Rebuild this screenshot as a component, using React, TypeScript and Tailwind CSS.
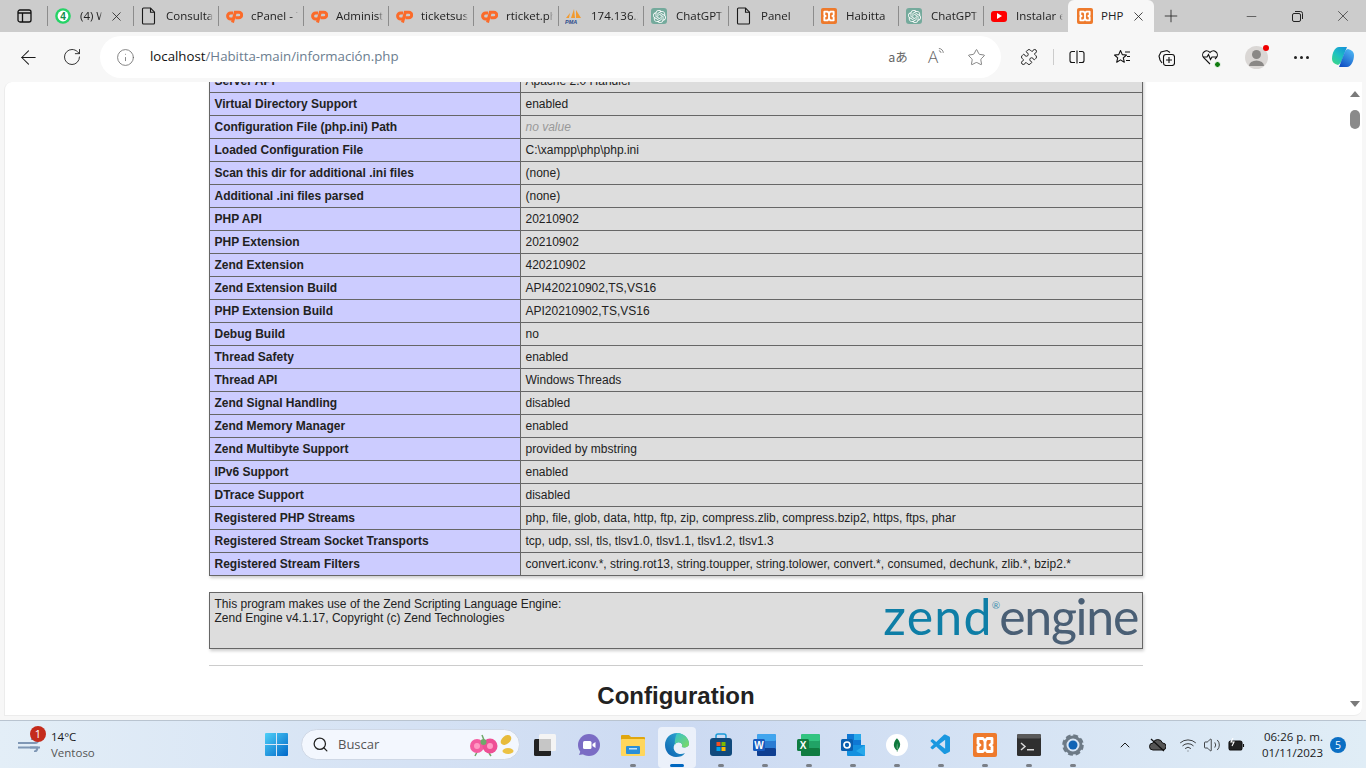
import React from "react";
import { ArrowLeft, RotateCw, Info, Star, Puzzle, X, Plus, Minus, ChevronUp, Wifi, Volume2, Search } from "lucide-react";
import { SiOpenai, SiMongodb } from "react-icons/si";
import { VscVscode } from "react-icons/vsc";

const Doc = () => (
  <svg width="16" height="18" viewBox="0 0 16 18" fill="none" stroke="#1a1a1a" strokeWidth="1.100"><path d="M2.500 1h7l4 4.200V16a1 1 0 0 1-1 1h-10a1 1 0 0 1-1-1V2a1 1 0 0 1 1-1z" /><path d="M9.500 1v4.200h4" /></svg>
);
const CP = () => (
  <svg width="17" height="13" viewBox="0 0 17 13" fill="none" stroke="#fb6b2a" strokeWidth="3"><path d="M7 3H4.600a3 3 0 0 0 0 6H7" /><path d="M6.500 12.500 9.300 2.200h3.600a2.700 2.700 0 0 1 0 5.600H9.500" /></svg>
);
const Pma = () => (
  <svg width="18" height="16" viewBox="0 0 18 16"><path d="M1 10 5 5l-1 5zM6 10l3-9 1 9zM11 10l0-8 5 8z" fill="#f29a2e" /><text x="0" y="15.500" fontSize="5.500" fontWeight="700" fontStyle="italic" fill="#2b4a8b" fontFamily="Liberation Sans">PMA</text></svg>
);
const Gpt = () => (
  <span className="w-4 h-4 rounded-[3px] bg-[#74aa9c] flex items-center justify-center text-white"><SiOpenai size={13} /></span>
);
const Xampp = ({ s = 16 }: { s?: number }) => (
  <span className="rounded-[2px] bg-[#ee7a2c] flex items-center justify-center" style={{ width: s, height: s }}>
    <svg width={s} height={s} viewBox="0 0 24 24" fill="none" stroke="#fff" strokeWidth="2.800" strokeLinejoin="round"><path d="M5 5.500h5l2 2.500 2-2.500h5v5l-2 1.500 2 1.500v5h-5l-2-2.500-2 2.500H5v-5L7 12l-2-1.500z" /><path d="M12 8v8" /></svg>
  </span>
);
const Wa = () => (
  <svg width="16" height="16" viewBox="0 0 16 16"><circle cx="8" cy="8" r="7.800" fill="#25d366" /><circle cx="8" cy="8" r="5.400" fill="#fff" /><text x="8" y="11.600" fontSize="10" fontWeight="700" fill="#128c4a" textAnchor="middle" fontFamily="Liberation Sans">4</text></svg>
);
const Yt = () => (
  <span className="w-4 h-[11px] rounded-[3px] bg-[#ff0000] flex items-center justify-center"><svg width="6" height="6" viewBox="0 0 6 6"><path d="M1 0l5 3-5 3z" fill="#fff" /></svg></span>
);

const tabs: { icon: React.ReactNode; label: string; close?: boolean }[] = [
  { icon: <Wa />, label: "(4) W", close: true },
  { icon: <Doc />, label: "Consultar" },
  { icon: <CP />, label: "cPanel - T" },
  { icon: <CP />, label: "Administr" },
  { icon: <CP />, label: "ticketsus" },
  { icon: <CP />, label: "rticket.ph" },
  { icon: <Pma />, label: "174.136.2" },
  { icon: <Gpt />, label: "ChatGPT" },
  { icon: <Doc />, label: "Panel" },
  { icon: <Xampp />, label: "Habitta" },
  { icon: <Gpt />, label: "ChatGPT" },
  { icon: <Yt />, label: "Instalar e" },
];

const TabBar = () => (
  <div className="h-8 bg-[#cccccc] flex items-center text-[11.500px] text-[#222222] shrink-0">
    <div className="w-[47px] h-full flex items-center justify-center pl-[1px]">
      <svg width="15" height="14" viewBox="0 0 15 14" fill="none" stroke="#111" strokeWidth="1.300"><rect x="1" y="1" width="13" height="12" rx="2" /><path d="M1 4h13M5.500 4v9" /></svg>
    </div>
    {tabs.map((t, i) => (
      <div key={i} className={`${t.close ? "w-[86px]" : "w-[85px]"} h-full flex items-center`}>
        <div className="w-px h-5 bg-[#8c8c8c] shrink-0" />
        <div className="w-[32px] flex justify-center shrink-0 pr-[2px]">{t.icon}</div>
        <div className={`${t.close ? "w-[22px]" : "w-[47px]"} overflow-hidden whitespace-nowrap [mask-image:linear-gradient(to_right,black_90%,transparent)]`}>{t.label}</div>
        {t.close && <X size={15} strokeWidth={1.300} className="ml-[7px] text-[#222]" />}
      </div>
    ))}
    <div className="w-[86px] h-full bg-[#f7f7f7] rounded-t-[6px] flex items-center shrink-0">
      <div className="w-[33px] flex justify-center pl-[1px]"><Xampp /></div>
      <span className="w-[30px]">PHP</span>
      <X size={15} strokeWidth={1.300} />
    </div>
    <Plus size={20} strokeWidth={1} className="ml-[7px]" />
    <div className="flex-1" />
    <div className="w-[46px] flex justify-center"><Minus size={15} strokeWidth={1} /></div>
    <div className="w-[46px] flex justify-center">
      <svg width="11" height="11" viewBox="0 0 11 11" fill="none" stroke="#222" strokeWidth="1"><rect x=".5" y="2.500" width="8" height="8" rx="1.500" /><path d="M3 .5h5.500a2 2 0 0 1 2 2V8" /></svg>
    </div>
    <div className="w-[46px] flex justify-center"><X size={18} strokeWidth={0.9} /></div>
  </div>
);

const Slot = ({ w, children }: { w: string; children: React.ReactNode }) => (
  <div className={`${w} flex items-center justify-center shrink-0`}>{children}</div>
);

const Toolbar = () => (
  <div className="h-[50px] bg-[#f7f7f7] flex items-center shrink-0 text-[#1a1a1a]">
    <Slot w="w-[56px]"><ArrowLeft size={23} strokeWidth={1.050} /></Slot>
    <Slot w="w-[32px]"><RotateCw size={20} strokeWidth={1.050} /></Slot>
    <div className="ml-[12px] w-[901px] h-[42px] bg-white rounded-[21px] flex items-center shrink-0">
      <Info size={19} strokeWidth={1} className="ml-[16px] text-[#666]" />
      <span className="ml-[15px] text-[13.250px] text-[#6b7d8f]"><span className="text-[#111]">localhost</span>/Habitta-main/información.php</span>
      <div className="flex-1" />
      <span className="text-[12.500px] text-[#666] w-[20px] text-center font-['Noto_Sans_CJK_JP',sans-serif]">aあ</span>
      <span className="ml-[20px] w-[22px] flex items-start text-[17px] leading-[20px] font-light text-[#666]">A<svg width="7" height="10" viewBox="0 0 8 10" fill="none" stroke="#666" strokeWidth=".9"><path d="M1 1a5 5 0 0 1 5 5M1 3.500A3 3 0 0 1 3.500 6" /></svg></span>
      <Star size={19} strokeWidth={1} className="ml-[17px] mr-[15px] text-[#666]" />
    </div>
    <Slot w="w-[56px]"><Puzzle size={18} strokeWidth={1.250} /></Slot>
    <div className="w-px h-4 bg-[#cccccc] -ml-[4px]" />
    <Slot w="w-[46px]">
      <svg width="16" height="14" viewBox="0 0 16 14" fill="none" stroke="#111" strokeWidth="1.100"><path d="M6 1.500H3a2 2 0 0 0-2 2v7a2 2 0 0 0 2 2h3M10 1.500h3a2 2 0 0 1 2 2v7a2 2 0 0 1-2 2h-3M8 .5v13" /></svg>
    </Slot>
    <Slot w="w-[44px]">
      <svg width="18" height="17" viewBox="0 0 18 17" fill="none" stroke="#111" strokeWidth="1.100"><path d="M7.500 1.500 9.300 5.600l4.200.4-3.200 2.900 1 4.300-3.800-2.300-3.800 2.300 1-4.300L1.500 6l4.200-.4z" strokeLinejoin="round" /><path d="M12 3h5M14 7.500h3M13 11.500h4" /></svg>
    </Slot>
    <Slot w="w-[44px]">
      <svg width="17" height="17" viewBox="0 0 17 17" fill="none" stroke="#111" strokeWidth="1.100"><rect x="5.500" y="5.500" width="11" height="11" rx="2.500" /><path d="M11 8v6M8 11h6" /><path d="M12 3.500 9 1.500 3 3 1 7l1 4 2 3" /></svg>
    </Slot>
    <Slot w="w-[44px]">
      <div className="relative">
        <svg width="18" height="16" viewBox="0 0 18 16" fill="none" stroke="#111" strokeWidth="1.100"><path d="M9 15 2.500 8.500a4 4 0 0 1 6.500-5 4 4 0 0 1 6.500 5L14 10" /><path d="M2 8h4l1.500-2.500 2 5L11 8h5" /></svg>
        <span className="absolute -right-[2px] -bottom-[3px] w-[7px] h-[7px] rounded-full bg-[#107c10] border border-white" />
      </div>
    </Slot>
    <Slot w="w-[48px]">
      <div className="relative w-[23px] h-[23px] rounded-full bg-[#dad7d5]">
        <svg width="23" height="23" viewBox="0 0 23 23"><circle cx="11.500" cy="8.500" r="4.500" fill="#8a8886" /><path d="M4 20a7.500 5.500 0 0 1 15 0z" fill="#8a8886" /></svg>
        <span className="absolute -top-[1px] -right-[1px] w-[6px] h-[6px] rounded-full bg-[#f00000]" />
      </div>
    </Slot>
    <Slot w="w-[42px]">
      <div className="flex gap-[3px]"><i className="w-[3px] h-[3px] rounded-full bg-[#222]" /><i className="w-[3px] h-[3px] rounded-full bg-[#222]" /><i className="w-[3px] h-[3px] rounded-full bg-[#222]" /></div>
    </Slot>
    <Slot w="w-[42px]">
      <svg width="24" height="24" viewBox="0 0 24 24"><defs><linearGradient id="cpa" x1="0.800" y1="0" x2="0.200" y2="1"><stop offset="0" stopColor="#4fb8f5" /><stop offset="1" stopColor="#0f4fc4" /></linearGradient><linearGradient id="cpb" x1="0.800" y1="0" x2="0.200" y2="1"><stop offset="0" stopColor="#1596d8" /><stop offset="0.5" stopColor="#1fc2c0" /><stop offset="1" stopColor="#3ad68a" /></linearGradient></defs><path d="M8 2h8l-5 13c-.8 2-2 4-4 5-4-1-6-3-6-6 0-6 3-12 7-12z" fill="url(#cpb)" /><path d="M16 22H8l5-13c.8-2 2-5 4-5 4 1 6 3 6 6 0 6-3 12-7 12z" fill="url(#cpa)" /></svg>
    </Slot>
  </div>
);

const rows: [string, string, boolean?][] = [
  ["Server API", "Apache 2.0 Handler"],
  ["Virtual Directory Support", "enabled"],
  ["Configuration File (php.ini) Path", "no value", true],
  ["Loaded Configuration File", "C:\\xampp\\php\\php.ini"],
  ["Scan this dir for additional .ini files", "(none)"],
  ["Additional .ini files parsed", "(none)"],
  ["PHP API", "20210902"],
  ["PHP Extension", "20210902"],
  ["Zend Extension", "420210902"],
  ["Zend Extension Build", "API420210902,TS,VS16"],
  ["PHP Extension Build", "API20210902,TS,VS16"],
  ["Debug Build", "no"],
  ["Thread Safety", "enabled"],
  ["Thread API", "Windows Threads"],
  ["Zend Signal Handling", "disabled"],
  ["Zend Memory Manager", "enabled"],
  ["Zend Multibyte Support", "provided by mbstring"],
  ["IPv6 Support", "enabled"],
  ["DTrace Support", "disabled"],
  ["Registered PHP Streams", "php, file, glob, data, http, ftp, zip, compress.zlib, compress.bzip2, https, ftps, phar"],
  ["Registered Stream Socket Transports", "tcp, udp, ssl, tls, tlsv1.0, tlsv1.1, tlsv1.2, tlsv1.3"],
  ["Registered Stream Filters", "convert.iconv.*, string.rot13, string.toupper, string.tolower, convert.*, consumed, dechunk, zlib.*, bzip2.*"],
];

const Page = () => (
  <div className="flex-1 flex min-h-0 bg-[#f7f7f7] pl-[4px] pr-[4px] pb-[4px]">
    <div className="flex-1 bg-white rounded-tl-[8px] rounded-br-[8px] overflow-hidden flex border border-[#ececec] border-r-0 border-t-0">
      <div className="w-[1343px] shrink-0 -mt-[13px] font-['Liberation_Sans',sans-serif] text-[12px] text-[#222222] pl-[204px]">
        <table className="border-collapse w-[934px] table-fixed shadow-[1px_2px_3px_rgba(0,0,0,0.2)]">
          <colgroup><col className="w-[311px]" /><col /></colgroup>
          <tbody>
            {rows.map(([k, v, nv]) => (
              <tr key={k} className="h-[23px]">
                <td className="border border-[#666666] bg-[#ccccff] pl-[4.500px] pr-[5px] py-0 font-bold">{k}</td>
                <td className={`border border-[#666666] bg-[#dddddd] pl-[4.500px] pr-[5px] py-0 ${nv ? "italic text-[#999999]" : ""}`}>{v}</td>
              </tr>
            ))}
          </tbody>
        </table>
        <div className="mt-[16px] w-[934px] h-[57px] border border-[#666666] bg-[#dddddd] shadow-[1px_2px_3px_rgba(0,0,0,0.2)] flex justify-between pl-[4.500px] pr-[4px] leading-[14px] pt-[4px]">
          <div>This program makes use of the Zend Scripting Language Engine:<br />Zend Engine v4.1.17, Copyright (c) Zend Technologies</div>
          <div className="flex items-start font-['Lato',sans-serif] text-[50px] leading-[48px] -mt-[5px]">
            <span className="text-[#0e7ea6] tracking-[1.300px]">zend</span>
            <span className="text-[10px] leading-[10px] mt-[8px] text-[#3f90b0] -ml-[1px] -mr-[1px]">®</span>
            <span className="text-[#4a5f75] tracking-[-1.300px]">engine</span>
          </div>
        </div>
        <div className="mt-[16px] w-[934px] h-px bg-[#cccccc]" />
        <h2 className="mt-[16px] w-[934px] text-center text-[24px] leading-[28px] font-bold text-[#222222]">Configuration</h2>
      </div>
      <div className="flex-1 flex flex-col items-center">
        <div className="mt-[9px] w-0 h-0 border-x-[5px] border-x-transparent border-b-[6px] border-b-[#7a7a7a]" />
        <div className="mt-[13px] w-[10px] h-[19px] rounded-[5px] bg-[#8a8a8a]" />
        <div className="flex-1" />
        <div className="mb-[8px] w-0 h-0 border-x-[5px] border-x-transparent border-t-[6px] border-t-[#7a7a7a]" />
      </div>
    </div>
  </div>
);

const Pin = ({ children, on, dot = true }: { children: React.ReactNode; on?: boolean; dot?: boolean }) => (
  <div className="w-[44px] h-full flex items-center justify-center relative shrink-0">
    {on && <div className="absolute left-[3px] right-[3px] top-[6px] bottom-0 bg-white/60 rounded-[4px]" />}
    <div className="relative">{children}</div>
    {on && <span className="absolute bottom-[1px] left-[15px] w-[14px] h-[3px] rounded-[2px] bg-[#0067c0]" />}
    {dot && !on && <span className="absolute bottom-[1px] left-[19px] w-[6px] h-[3px] rounded-[2px] bg-[#7a7f87]" />}
  </div>
);

const Office = ({ l, a, b, c, d }: { l: string; a: string; b: string; c: string; d: string }) => (
  <svg width="24" height="24" viewBox="0 0 24 24"><rect x="4" y="1" width="19" height="22" rx="1.500" fill={b} /><rect x="4" y="1" width="19" height="7" rx="1.500" fill={a} /><rect x="4" y="15" width="19" height="8" rx="1.500" fill={c} /><rect x="0" y="6" width="12" height="12" rx="1.500" fill={d} /><text x="6" y="15.500" textAnchor="middle" fontSize="10" fontWeight="700" fill="#fff" fontFamily="Liberation Sans">{l}</text></svg>
);

const Taskbar = () => (
  <div className="h-[48px] shrink-0 border-t border-[#b9c4d0] flex items-center bg-gradient-to-r from-[#e3eef7] via-[#ccdaf2] to-[#e0edf6] font-['Open_Sans',sans-serif] text-[#1a1a1a]">
    <div className="w-[51px] h-full flex items-center justify-end relative shrink-0 pr-[9px]">
      <svg width="24" height="14" viewBox="0 0 24 14" fill="none" stroke="#7f97b5" strokeWidth="2.200"><path d="M0 5h17a3 3 0 1 0-3-3M0 9.500h22" /><path d="M12 9.500h7a3 3 0 0 1-3 4" /></svg>
      <span className="absolute left-[30px] top-[5px] w-4 h-4 rounded-full bg-[#c42b1c] text-white text-[11px] leading-4 text-center">1</span>
    </div>
    <div className="w-[214px] shrink-0 text-[11.500px] leading-[16px]">
      <div>14°C</div>
      <div className="text-[#555]">Ventoso</div>
    </div>
    <div className="w-[36px] flex justify-start shrink-0">
      <svg width="23" height="23" viewBox="0 0 23 23"><defs><linearGradient id="win" x1="0" y1="0" x2="1" y2="1"><stop offset="0" stopColor="#4fd0f8" /><stop offset="1" stopColor="#0067c8" /></linearGradient></defs><path d="M0 1a1 1 0 0 1 1-1h10v11H0zM12 0h10a1 1 0 0 1 1 1v10H12zM0 12h11v11H1a1 1 0 0 1-1-1zM12 12h11v10a1 1 0 0 1-1 1H12z" fill="url(#win)" /></svg>
    </div>
    <div className="w-[219px] h-[31px] rounded-full bg-[#f3f7fe] border border-[#cfd8e6] flex items-center shrink-0">
      <Search size={17} strokeWidth={1.800} className="ml-[10px] text-[#222]" />
      <span className="ml-[9px] text-[13px] text-[#555]">Buscar</span>
      <div className="flex-1" />
      <svg width="46" height="26" viewBox="0 0 46 26" className="mr-[4px]"><path d="M13 3l2 5M8 20l-2 4M20 21l2 3" stroke="#6fa86a" strokeWidth="1.500" /><circle cx="8" cy="14" r="7" fill="#f45ca0" /><circle cx="21" cy="14" r="7.500" fill="#ee4f95" /><circle cx="14.500" cy="10" r="3" fill="#6fa86a" /><circle cx="8" cy="14" r="3" fill="#ff9ac4" /><circle cx="21" cy="14" r="3" fill="#ff9ac4" /><ellipse cx="37" cy="8" rx="6" ry="4" fill="#e7bb3c" transform="rotate(-40 37 8)" /><ellipse cx="39" cy="19" rx="5.500" ry="3" fill="#ecc244" /></svg>
    </div>
    <div className="h-full flex items-center ml-[3px]">
      <Pin dot={false}>
        <svg width="24" height="24" viewBox="0 0 24 24"><rect x="6" y="1" width="17" height="17" rx="1.500" fill="#f4f4f4" /><rect x="1" y="6" width="17" height="17" rx="1.500" fill="#222" /><rect x="6" y="6" width="12" height="12" fill="#c6c6c6" /></svg>
      </Pin>
      <Pin dot={false}>
        <svg width="24" height="24" viewBox="0 0 24 24"><circle cx="12" cy="12" r="11" fill="#7b6cc4" /><path d="M2 22l2-5 4 4z" fill="#7b6cc4" /><rect x="6" y="8" width="8.500" height="8" rx="1.500" fill="#fff" /><path d="M15.500 11l3-2v6l-3-2z" fill="#fff" /></svg>
      </Pin>
      <Pin>
        <svg width="24" height="22" viewBox="0 0 24 22"><path d="M0 2a1 1 0 0 1 1-1h7l2 2h13a1 1 0 0 1 1 1v3H0z" fill="#e0a60e" /><rect y="5" width="24" height="17" rx="1" fill="#ffd65c" /><rect x="5" y="12" width="14" height="8" rx="1" fill="#2a8fd8" /><rect x="8" y="14" width="8" height="1.500" fill="#bfe3fa" /></svg>
      </Pin>
      <Pin on>
        <svg width="24" height="24" viewBox="0 0 24 24"><defs><linearGradient id="edg" x1="0" y1="1" x2="1" y2="0"><stop offset="0" stopColor="#0b5fb0" /><stop offset="1" stopColor="#36b6d8" /></linearGradient><linearGradient id="edh" x1="0" y1="0" x2="1" y2="1"><stop offset="0" stopColor="#35c1d0" /><stop offset="1" stopColor="#7fdc5e" /></linearGradient></defs><path d="M12 0C5 0 0 5.500 0 12c0 7 5 12 11 12 4 0 7-1 9-4-3 1.500-7 1.500-9.500-1-2-2-2.500-5-1-7.500C11 9 14 8.500 16 10c1.500 1.200 1.500 3 .8 4 3 1 7 0 7.200-3C24 5 18.500 0 12 0z" fill="url(#edg)" /><path d="M12 0c6.500 0 12 5 12 11 0 3-4 4-7.200 3 .7-1 .7-2.800-.8-4-2-1.500-5-1-6 2 0 0-1-6 2-12z" fill="url(#edh)" /></svg>
      </Pin>
      <Pin>
        <svg width="24" height="24" viewBox="0 0 24 24" fill="none"><path d="M7 6V3a2 2 0 0 1 2-2h6a2 2 0 0 1 2 2v3" stroke="#1a9bd8" strokeWidth="1.500" /><rect x="1" y="5" width="22" height="18" rx="3" fill="#114a7c" /><rect x="7.500" y="9" width="4" height="4" fill="#f25022" /><rect x="12.500" y="9" width="4" height="4" fill="#7fba00" /><rect x="7.500" y="14" width="4" height="4" fill="#00a4ef" /><rect x="12.500" y="14" width="4" height="4" fill="#ffb900" /></svg>
      </Pin>
      <Pin><Office l="W" a="#41a5ee" b="#2b7cd3" c="#103f91" d="#185abd" /></Pin>
      <Pin><Office l="X" a="#33c481" b="#21a366" c="#107c41" d="#107c41" /></Pin>
      <Pin>
        <svg width="24" height="24" viewBox="0 0 24 24"><rect x="6" y="1" width="14" height="11" fill="#0f78d4" /><rect x="13" y="1" width="7" height="6" fill="#28a8ea" /><path d="M6 12h18v10a1 1 0 0 1-1 1H7a1 1 0 0 1-1-1z" fill="#1490df" /><path d="M24 12l-9 6 9 5z" fill="#28a8ea" /><rect x="0" y="6" width="12" height="12" rx="1.500" fill="#0a5fb0" /><circle cx="6" cy="12" r="3" fill="none" stroke="#fff" strokeWidth="1.700" /></svg>
      </Pin>
      <Pin>
        <span className="w-[22px] h-[22px] rounded-full bg-white flex items-center justify-center text-[#0f7a3d]"><SiMongodb size={14} /></span>
      </Pin>
      <Pin><VscVscode size={24} className="text-[#1a98e0]" /></Pin>
      <Pin><Xampp s={24} /></Pin>
      <Pin>
        <svg width="24" height="22" viewBox="0 0 24 22"><rect width="24" height="22" rx="1.500" fill="#2f2f2f" /><rect width="24" height="4.500" rx="1.500" fill="#5a5a5a" /><path d="M4 9l4 3.500L4 16" fill="none" stroke="#d8d8d8" strokeWidth="1.500" /><rect x="10" y="15" width="7" height="1.500" fill="#d8d8d8" /></svg>
      </Pin>
      <Pin>
        <svg width="24" height="24" viewBox="0 0 24 24" fill="none"><circle cx="12" cy="12" r="9" stroke="#6d7a86" strokeWidth="3.600" strokeDasharray="4.500 2.570" /><circle cx="12" cy="12" r="8" stroke="#6d7a86" strokeWidth="3" /><circle cx="12" cy="12" r="4.500" fill="#0f63b5" /></svg>
      </Pin>
    </div>
    <div className="flex-1" />
    <div className="flex items-center shrink-0">
      <ChevronUp size={16} strokeWidth={1.500} />
      <svg width="17" height="14" viewBox="0 0 17 14" className="ml-[16px]"><path d="M4 12a3.500 3.500 0 0 1 0-7 5 5 0 0 1 9.500 0 3.500 3.500 0 0 1 0 7z" fill="#555" stroke="#111" strokeWidth="1" /><path d="M2 1l13 12" stroke="#111" strokeWidth="1.300" /></svg>
      <Wifi size={18} strokeWidth={1.100} className="ml-[13px]" />
      <Volume2 size={18} strokeWidth={1.050} className="ml-[6px]" />
      <svg width="17" height="13" viewBox="0 0 17 13" className="ml-[7px]" fill="none" stroke="#111" strokeWidth="1.100"><rect x="1" y="3" width="13" height="9" rx="2" fill="#222" /><path d="M15.500 6v3" /><path d="M5 0 3 4h3L4 8" stroke="#fff" /></svg>
      <div className="ml-[8px] w-[70px] text-right text-[11.500px] leading-[16px]">
        <div>06:26 p. m.</div>
        <div>01/11/2023</div>
      </div>
      <span className="ml-[7px] mr-[20px] w-4 h-4 rounded-full bg-[#0b6fc4] text-white text-[10.500px] leading-4 text-center">5</span>
    </div>
  </div>
);

export default function App() {
  return (
    <div className="w-[1366px] h-[768px] overflow-hidden flex flex-col bg-[#f7f7f7] font-['Open_Sans',sans-serif]">
      <TabBar />
      <Toolbar />
      <Page />
      <Taskbar />
    </div>
  );
}
